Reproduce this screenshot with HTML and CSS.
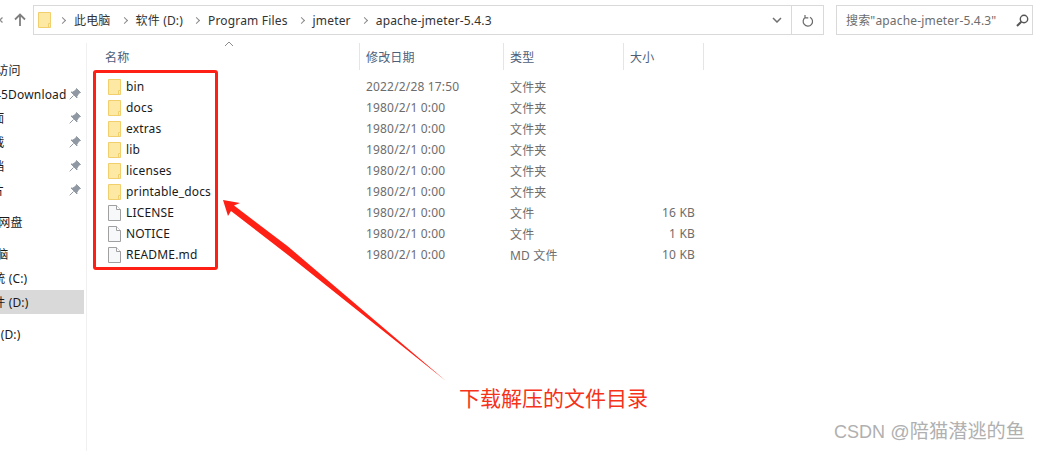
FILE: index.html
```html
<!DOCTYPE html>
<html>

<head>
    <meta charset="UTF-8">
    <meta name="viewport" content="width=device-width, initial-scale=1">
    <link rel="stylesheet" href="styles.css">
    <title>apache-jmeter-5.4.3</title>
</head>

<body>
    <div class="toolbar">
        <svg class="nav-back" width="6" height="12" viewBox="0 0 6 12"><path d="M3.500 3.500L0.800 6L3.500 8.500" fill="none" stroke="#8a8a8a" stroke-width="1.300"/></svg>
        <svg class="nav-up" width="12" height="14" viewBox="0 0 12 14"><path d="M6 13V1.500M1 6.500L6 1.500L11 6.500" fill="none" stroke="#7f7f7f" stroke-width="1.800"/></svg>
        <div class="address">
            <svg class="address-folder" width="13" height="16" viewBox="0 0 13 16"><use href="#folder"/></svg>
            <span class="crumb-sep"></span><span class="crumb">此电脑</span>
            <span class="crumb-sep"></span><span class="crumb">软件 (D:)</span>
            <span class="crumb-sep"></span><span class="crumb">Program Files</span>
            <span class="crumb-sep"></span><span class="crumb">jmeter</span>
            <span class="crumb-sep"></span><span class="crumb">apache-jmeter-5.4.3</span>
            <svg class="address-drop" width="10" height="6" viewBox="0 0 10 6"><path d="M1 1L5 5L9 1" fill="none" stroke="#707070" stroke-width="1.500"/></svg>
        </div>
        <div class="refresh">
            <svg width="12" height="14" viewBox="0 0 12 14"><path d="M3.500 3.300A4.700 4.700 0 1 0 8 3.200M3 1V3.800H6.300" fill="none" stroke="#6a6a6a" stroke-width="1.200" transform="translate(0 1)"/></svg>
        </div>
        <div class="search">
            <span>搜索"apache-jmeter-5.4.3"</span>
            <svg width="13" height="13" viewBox="0 0 13 13"><circle cx="8" cy="5" r="3.700" fill="none" stroke="#555" stroke-width="1.400"/><path d="M5.300 7.700L1 12" stroke="#555" stroke-width="2"/></svg>
        </div>
    </div>

    <div class="explorer">
        <div class="sidebar">
            <div class="nav-row"><span class="indent-quick">快速访问</span></div>
            <div class="nav-row"><span class="indent-download">345Download</span><svg class="pin" viewBox="0 0 12 12"><use href="#pin"/></svg></div>
            <div class="nav-row"><span class="indent-pinned">桌面</span><svg class="pin" viewBox="0 0 12 12"><use href="#pin"/></svg></div>
            <div class="nav-row"><span class="indent-pinned">下载</span><svg class="pin" viewBox="0 0 12 12"><use href="#pin"/></svg></div>
            <div class="nav-row"><span class="indent-pinned">文档</span><svg class="pin" viewBox="0 0 12 12"><use href="#pin"/></svg></div>
            <div class="nav-row"><span class="indent-pinned">图片</span><svg class="pin" viewBox="0 0 12 12"><use href="#pin"/></svg></div>
            <div class="nav-row group-gap"><span class="indent-cloud">百度网盘</span></div>
            <div class="nav-row group-gap"><span class="indent-pc">此电脑</span></div>
            <div class="nav-row"><span class="indent-drive">系统 (C:)</span></div>
            <div class="nav-row selected"><span class="indent-drive">软件 (D:)</span></div>
            <div class="nav-row group-gap"><span class="indent-net">软件 (D:)</span></div>
        </div>

        <div class="files">
            <div class="file-head">
                <div class="head-cell head-name">名称<svg class="sort-caret" width="10" height="6" viewBox="0 0 10 6"><path d="M1 5L5 1L9 5" fill="none" stroke="#8c8c8c"/></svg></div>
                <div class="head-cell">修改日期</div>
                <div class="head-cell">类型</div>
                <div class="head-cell">大小</div>
            </div>
            <div class="file-list">
                <div class="file-row"><div class="file-name"><svg class="ico"><use href="#folder"/></svg>bin</div><div>2022/2/28 17:50</div><div>文件夹</div><div class="file-size"></div></div>
                <div class="file-row"><div class="file-name"><svg class="ico"><use href="#folder"/></svg>docs</div><div>1980/2/1 0:00</div><div>文件夹</div><div class="file-size"></div></div>
                <div class="file-row"><div class="file-name"><svg class="ico"><use href="#folder"/></svg>extras</div><div>1980/2/1 0:00</div><div>文件夹</div><div class="file-size"></div></div>
                <div class="file-row"><div class="file-name"><svg class="ico"><use href="#folder"/></svg>lib</div><div>1980/2/1 0:00</div><div>文件夹</div><div class="file-size"></div></div>
                <div class="file-row"><div class="file-name"><svg class="ico"><use href="#folder"/></svg>licenses</div><div>1980/2/1 0:00</div><div>文件夹</div><div class="file-size"></div></div>
                <div class="file-row"><div class="file-name"><svg class="ico"><use href="#folder"/></svg>printable_docs</div><div>1980/2/1 0:00</div><div>文件夹</div><div class="file-size"></div></div>
                <div class="file-row"><div class="file-name"><svg class="ico"><use href="#doc"/></svg>LICENSE</div><div>1980/2/1 0:00</div><div>文件</div><div class="file-size">16 KB</div></div>
                <div class="file-row"><div class="file-name"><svg class="ico"><use href="#doc"/></svg>NOTICE</div><div>1980/2/1 0:00</div><div>文件</div><div class="file-size">1 KB</div></div>
                <div class="file-row"><div class="file-name"><svg class="ico"><use href="#doc"/></svg>README.md</div><div>1980/2/1 0:00</div><div>MD 文件</div><div class="file-size">10 KB</div></div>
            </div>
        </div>
    </div>

    <!-- annotations drawn over the screenshot -->
    <div class="mark-box"></div>
    <svg class="mark-arrow" width="240" height="200" viewBox="0 0 240 200"><polygon points="1,0 18,3 12,5.500 66,46.500 224,181 66,55 9,11 6,16" fill="#ff2015"/></svg>
    <div class="mark-text">下载解压的文件目录</div>
    <div class="watermark"><span class="watermark-name">CSDN</span> @陪猫潜逃的鱼</div>

    <svg class="defs" width="0" height="0">
        <symbol id="folder" viewBox="0 0 13 16"><path d="M0.500 0.500H12.500V15.500H0.500Z" fill="#fee9a4" stroke="#f0cf6c"/><path d="M10.500 15V11.500H12.500" fill="#fff3bd" stroke="#f0cf6c"/></symbol>
        <symbol id="doc" viewBox="0 0 13 16"><path d="M0.500 0.500H8.500L12.500 4.500V15.500H0.500Z" fill="#f7f8fa" stroke="#a0a0a0"/><path d="M8.500 0.500V4.500H12.500" fill="#fff" stroke="#a0a0a0"/></symbol>
        <symbol id="pin" viewBox="0 0 12 12"><path d="M7.500 0.500L11.500 4.500L10 5L7.800 8.300L8 10L2 4L3.700 4.200L7 2ZM4.500 7.500L0.700 11.300" fill="#8f98a3" stroke="#8f98a3"/></symbol>
    </svg>
</body>

</html>
```

FILE: styles.css
```css
* {
    box-sizing: border-box;
}

html, body {
    height: 100%;
}

body {
    position: relative;
    margin: 0;
    overflow: hidden;
    background: #fff;
    color: #1a1a1a;
    font-family: "Noto Sans", "Noto Sans CJK SC", sans-serif;
    font-size: 12px;
    letter-spacing: 0.17px;
}

.defs {
    position: absolute;
}

/* top bar */
.toolbar {
    display: flex;
    align-items: center;
    height: 43px;
    padding: 5px 8px 8px 0;
}

.nav-back {
    margin-left: -1px;
}

.nav-up {
    margin-left: 9px;
    margin-right: 7px;
}

.address {
    display: flex;
    align-items: center;
    width: 759px;
    height: 30px;
    padding-left: 4px;
    border: 1px solid #d9d9d9;
    color: #333;
}

.crumb-sep {
    width: 5px;
    height: 5px;
    margin: 0 9px 0 8px;
    border-top: 1px solid #8a8a8a;
    border-right: 1px solid #8a8a8a;
    transform: rotate(45deg);
}

.address-folder + .crumb-sep {
    margin-left: 9px;
}

.crumb {
    margin-right: 3px;
}

.address-drop {
    margin-left: auto;
    margin-right: 9px;
}

.refresh {
    display: flex;
    align-items: center;
    justify-content: center;
    width: 32px;
    height: 30px;
    border: 1px solid #d9d9d9;
    border-left: 0;
}

.search {
    display: flex;
    align-items: center;
    justify-content: space-between;
    width: 197px;
    height: 30px;
    margin-left: 12px;
    padding: 0 3px 0 9px;
    border: 1px solid #d9d9d9;
    color: #6d6d6d;
}

/* sidebar and list */
.explorer {
    display: flex;
    height: 408px;
}

.sidebar {
    width: 87px;
    flex-shrink: 0;
    padding: 15px 2px 0 0;
    border-right: 1px solid #f0f0f0;
    overflow: hidden;
}

.nav-row {
    display: flex;
    align-items: center;
    height: 24px;
    overflow: hidden;
    white-space: nowrap;
}

.group-gap {
    margin-top: 8px;
}

.selected {
    background: #d9d9d9;
}

.indent-quick {
    margin-left: -28px;
}

.indent-download {
    margin-left: -13px;
}

.indent-pinned {
    margin-left: -20px;
}

.indent-cloud {
    margin-left: -26px;
}

.indent-pc {
    margin-left: -28px;
}

.indent-drive {
    margin-left: -19px;
}

.indent-net {
    margin-left: -27px;
}

.pin {
    width: 12px;
    height: 12px;
    margin-left: auto;
    margin-right: 3px;
    flex-shrink: 0;
}

.files {
    flex: 1;
    color: #6d6d6d;
}

.file-head,
.file-row {
    display: grid;
    grid-template-columns: 273px 144px 120px 80px;
}

.file-head {
    height: 27px;
    color: #4c607a;
}

.head-cell {
    display: flex;
    align-items: center;
    padding-left: 6px;
    border-right: 1px solid #e5e5e5;
}

.head-cell.head-name {
    position: relative;
    padding-left: 18px;
}

.sort-caret {
    position: absolute;
    left: 137px;
    top: -2px;
}

.file-list {
    padding-top: 6px;
}

.file-row {
    height: 21px;
    align-items: center;
}

.file-row > div {
    padding-left: 6px;
}

.file-row > .file-name {
    display: flex;
    align-items: center;
    padding-left: 21px;
    color: #1a1a1a;
}

.ico {
    width: 13px;
    height: 16px;
    margin-right: 5px;
}

.file-row > .file-size {
    padding: 0 9px 0 0;
    text-align: right;
}

/* annotations */
.mark-box {
    position: absolute;
    left: 93px;
    top: 70px;
    width: 125px;
    height: 200px;
    border: 3px solid #ff2015;
    border-radius: 3px;
}

.mark-arrow {
    position: absolute;
    left: 222px;
    top: 200px;
}

.mark-text {
    position: absolute;
    left: 459px;
    top: 384px;
    color: #f5331b;
    font-size: 21px;
    line-height: 28px;
    letter-spacing: 0;
    white-space: nowrap;
}

.watermark {
    position: absolute;
    left: 834px;
    top: 418px;
    color: #b0b0b0;
    font-family: "Liberation Sans", "Noto Sans CJK SC", sans-serif;
    font-size: 19.200px;
    line-height: 28px;
    letter-spacing: 0;
    white-space: nowrap;
}

.watermark-name {
    font-size: 18px;
}
```
